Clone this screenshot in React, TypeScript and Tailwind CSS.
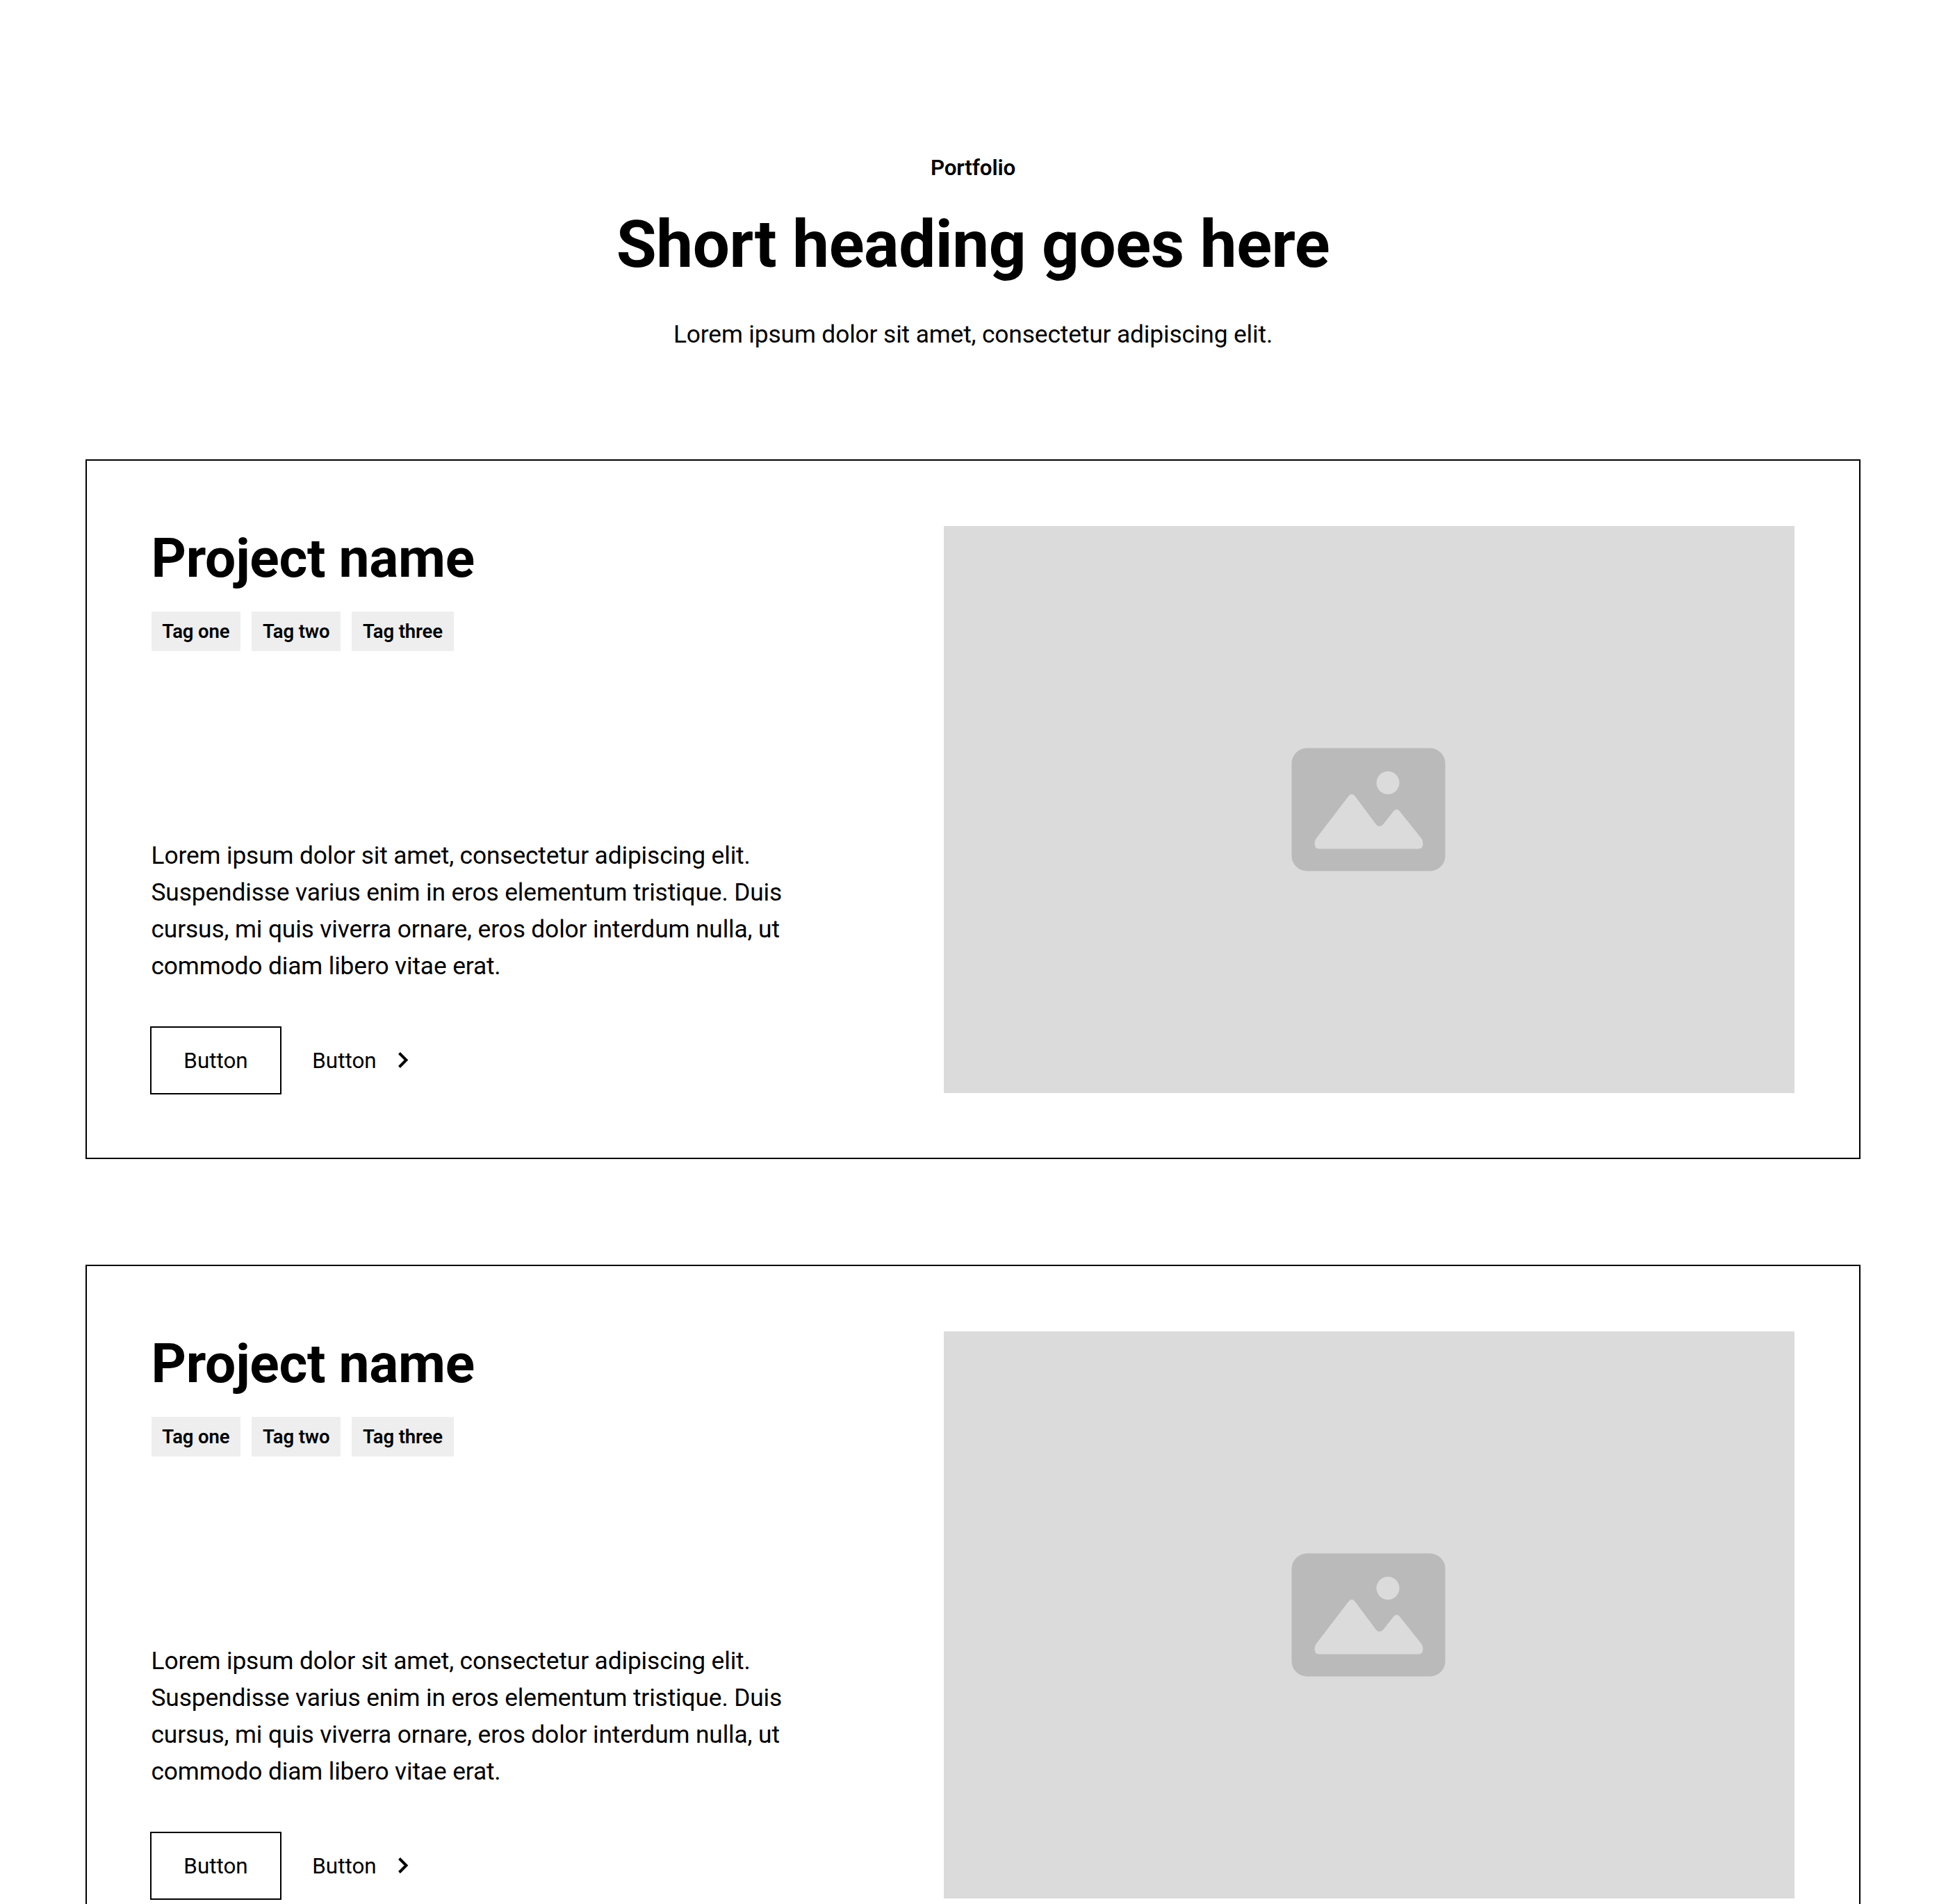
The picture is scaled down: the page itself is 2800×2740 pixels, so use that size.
const tags = ["Tag one", "Tag two", "Tag three"];

function PlaceholderIcon() {
  return (
    <svg className="mr-[2px]" width="222" height="178" viewBox="0 0 222 178" aria-hidden="true">
      <rect x="0.5" y="0.5" width="221" height="177" rx="22" fill="#bababa" />
      <circle cx="139" cy="50.5" r="16.5" fill="#dbdbdb" />
      <path
        d="M35.5 131 L82.5 69.5 Q87 64 91.5 69.5 L122 110.5 Q127 115.5 132 110.5 L147 91.5 Q151.5 86 156 91.5 L187.5 131 Q189.5 134 189.5 138 Q189.5 145.5 183 145.5 L40 145.5 Q33.5 145.5 33.5 138 Q33.5 134 35.5 131 Z"
        fill="#dbdbdb"
      />
    </svg>
  );
}

function ProjectCard() {
  return (
    <article className="flex h-[1007px] justify-between border-2 border-black pt-[93px] pr-[93px] pl-[92.5px]">
      <div className="flex h-[819px] w-[1000px] flex-col justify-between">
        <div>
          <h2 className="text-[78.5px] leading-[94px] font-bold tracking-[-0.0035em]">Project name</h2>
          <div className="mt-[30px] flex gap-[15.8px]">
            {tags.map((tag) => (
              <span
                key={tag}
                className="flex h-[57px] items-center bg-[#eeeeee] px-[15.8px] text-[27.5px] leading-[41px] font-semibold tracking-[-0.004em]"
              >
                {tag}
              </span>
            ))}
          </div>
        </div>
        <div>
          <p className="w-[930px] text-[35.35px] leading-[53px] tracking-[-0.004em]">
            Lorem ipsum dolor sit amet, consectetur adipiscing elit. Suspendisse varius enim in eros
            elementum tristique. Duis cursus, mi quis viverra ornare, eros dolor interdum nulla, ut
            commodo diam libero vitae erat.
          </p>
          <div className="mt-[60.5px] -ml-[1.5px] flex items-center text-[31.4px] leading-[47px]">
            <button className="h-[98px] w-[189px] border-2 border-black">Button</button>
            <button className="ml-[44.3px] flex items-center gap-[31.5px]">
              Button
              <svg className="mb-[2px]" width="15" height="23" viewBox="0 0 15 23" fill="none" aria-hidden="true">
                <path d="M1.5 1.5 L11.5 11.5 L1.5 21.5" stroke="#000" strokeWidth="4" />
              </svg>
            </button>
          </div>
        </div>
      </div>
      <div className="mt-px flex h-[816px] w-[1224px] items-center justify-center bg-[#dbdbdb]">
        <PlaceholderIcon />
      </div>
    </article>
  );
}

export default function App() {
  return (
    <main className="h-[2740px] w-[2800px] overflow-hidden bg-white px-[123px] pt-[218px] font-['Roboto',sans-serif] text-black">
      <header className="h-[443px] text-center">
        <p className="text-[31.4px] leading-[47px] font-semibold tracking-[-0.004em]">Portfolio</p>
        <h1 className="mt-[31px] text-[94.25px] leading-[112px] font-bold tracking-[-0.0045em]">
          Short heading goes here
        </h1>
        <p className="mt-[47px] text-[35.35px] leading-[52px] tracking-[-0.004em]">
          Lorem ipsum dolor sit amet, consectetur adipiscing elit.
        </p>
      </header>
      <div className="flex flex-col gap-[152px]">
        <ProjectCard />
        <ProjectCard />
      </div>
    </main>
  );
}
